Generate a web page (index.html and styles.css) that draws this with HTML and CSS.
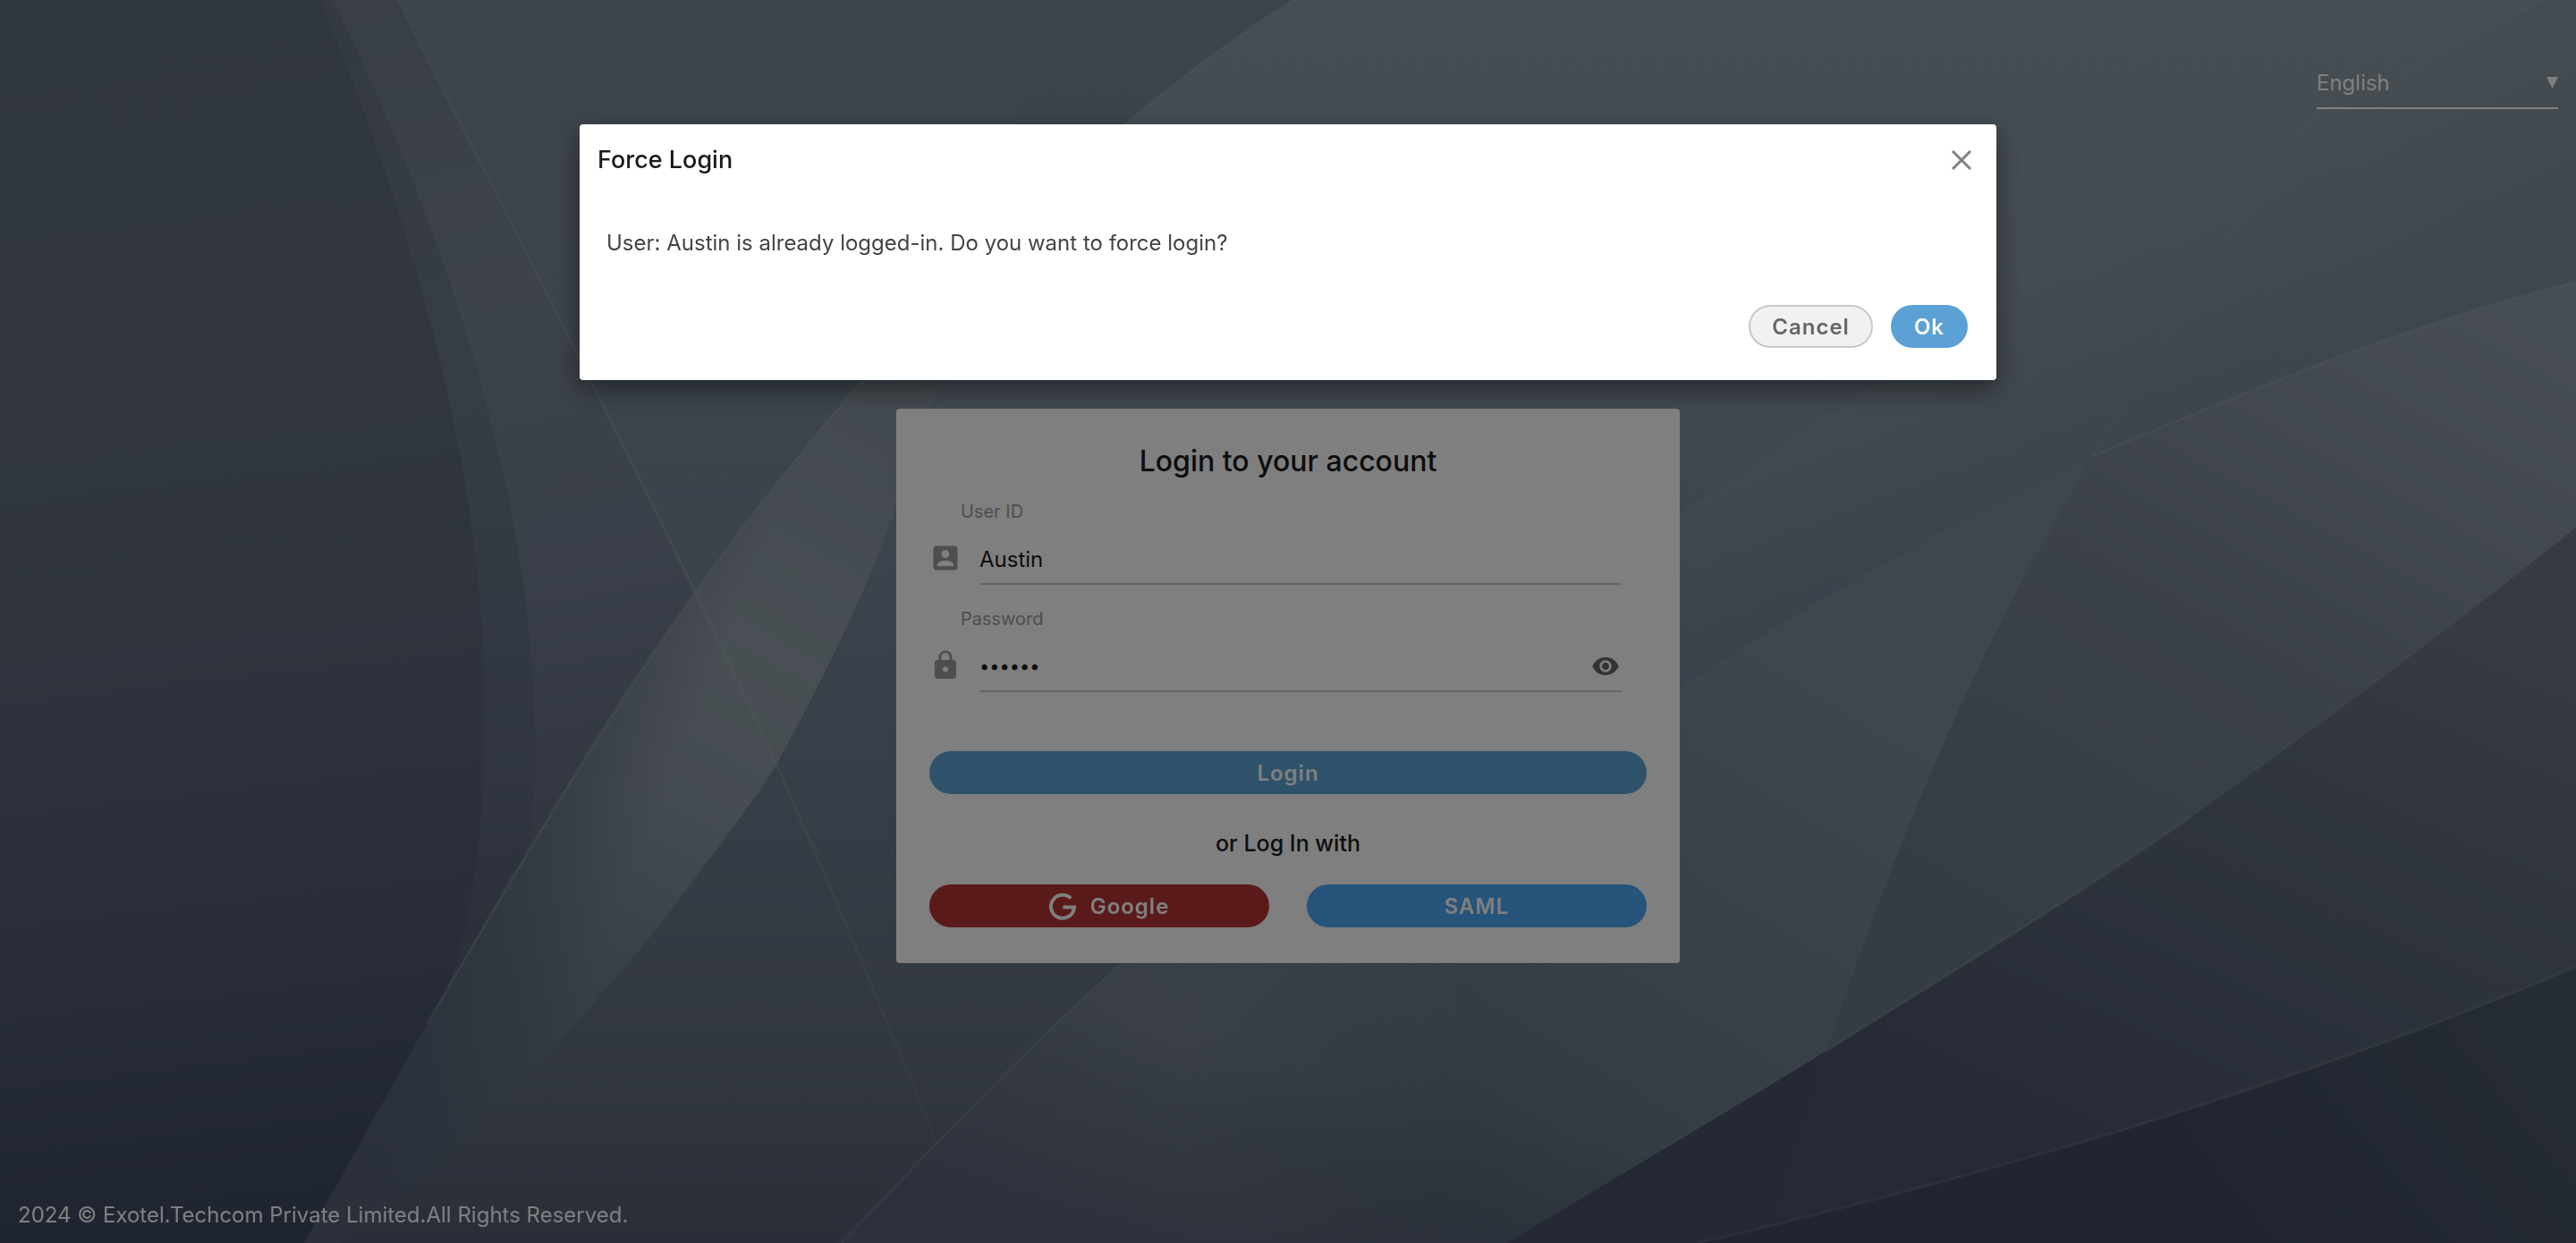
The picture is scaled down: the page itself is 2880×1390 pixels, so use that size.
FILE: index.html
```html
<!DOCTYPE html>
<html lang="en">
<head>
<meta charset="utf-8">
<meta name="viewport" content="width=device-width, initial-scale=1">
<title>Login</title>
<link rel="stylesheet" href="styles.css">
</head>
<body>
<svg class="backdrop" viewBox="0 0 2880 1390" preserveAspectRatio="none" aria-hidden="true">
  <defs>
    <linearGradient id="base" x1="0" y1="0" x2="0" y2="1"><stop offset="0" stop-color="#7a8894"/><stop offset=".4" stop-color="#768496"/><stop offset=".6" stop-color="#727f90"/><stop offset=".8" stop-color="#64707f"/><stop offset="1" stop-color="#525c70"/></linearGradient>
    <linearGradient id="strip" gradientUnits="userSpaceOnUse" x1="420" y1="0" x2="600" y2="1080"><stop offset="0" stop-color="#727f8a"/><stop offset=".3" stop-color="#7a8792"/><stop offset=".6" stop-color="#747f92"/><stop offset="1" stop-color="#5a647a"/></linearGradient>
    <linearGradient id="lobeOuter" x1="0" y1="0" x2="0" y2="1"><stop offset="0" stop-color="#687580"/><stop offset=".3" stop-color="#6e7b88"/><stop offset=".6" stop-color="#626d82"/><stop offset=".8" stop-color="#535d74"/><stop offset="1" stop-color="#465068"/></linearGradient>
    <linearGradient id="lobeInner" gradientUnits="userSpaceOnUse" x1="100" y1="0" x2="260" y2="1390"><stop offset="0" stop-color="#5f6d78"/><stop offset=".3" stop-color="#636f7b"/><stop offset=".5" stop-color="#5e687b"/><stop offset=".75" stop-color="#525c74"/><stop offset="1" stop-color="#3e4862"/></linearGradient>
    <linearGradient id="sky" gradientUnits="userSpaceOnUse" x1="0" y1="0" x2="0" y2="1390"><stop offset="0" stop-color="#8d9ca6"/><stop offset=".2" stop-color="#8a98a3"/><stop offset=".45" stop-color="#7a889a"/><stop offset=".7" stop-color="#6c788a"/><stop offset=".85" stop-color="#646f80"/><stop offset="1" stop-color="#525c70"/></linearGradient>
    <linearGradient id="ribbon" gradientUnits="userSpaceOnUse" x1="1100" y1="280" x2="500" y2="1390"><stop offset="0" stop-color="#7f8c98"/><stop offset=".2" stop-color="#8895a0"/><stop offset=".4" stop-color="#929fa8"/><stop offset=".55" stop-color="#8b98a2"/><stop offset=".78" stop-color="#667a84"/><stop offset="1" stop-color="#566176"/></linearGradient>
    <linearGradient id="ribbonEdge" gradientUnits="userSpaceOnUse" x1="500" y1="922" x2="700" y2="1002"><stop offset="0" stop-color="#566076" stop-opacity=".8"/><stop offset=".4" stop-color="#566076" stop-opacity=".55"/><stop offset="1" stop-color="#566076" stop-opacity="0"/></linearGradient>
    <linearGradient id="under" gradientUnits="userSpaceOnUse" x1="2240" y1="330" x2="2330" y2="500"><stop offset="0" stop-color="#8997a0"/><stop offset="1" stop-color="#7a8798"/></linearGradient>
    <linearGradient id="wave" gradientUnits="userSpaceOnUse" x1="1960" y1="720" x2="1560" y2="1390"><stop offset="0" stop-color="#808c9a"/><stop offset=".4" stop-color="#74818f"/><stop offset=".7" stop-color="#677a85"/><stop offset=".85" stop-color="#60707d"/><stop offset="1" stop-color="#566172"/></linearGradient>
    <linearGradient id="waveLeft" gradientUnits="userSpaceOnUse" x1="1000" y1="0" x2="1640" y2="0"><stop offset="0" stop-color="#6a7486"/><stop offset=".5" stop-color="#7e8a94" stop-opacity=".7"/><stop offset="1" stop-color="#7e8a94" stop-opacity="0"/></linearGradient>
    <linearGradient id="waveFoot" gradientUnits="userSpaceOnUse" x1="1300" y1="1150" x2="1240" y2="1390"><stop offset="0" stop-color="#566076" stop-opacity="0"/><stop offset="1" stop-color="#566076" stop-opacity=".9"/></linearGradient>
    <linearGradient id="waveRight" gradientUnits="userSpaceOnUse" x1="2760" y1="330" x2="2330" y2="1120"><stop offset="0" stop-color="#8f9ca6"/><stop offset=".3" stop-color="#828f99"/><stop offset=".5" stop-color="#76838f"/><stop offset=".8" stop-color="#6f7c89"/><stop offset="1" stop-color="#6a7a85"/></linearGradient>
    <linearGradient id="deep" gradientUnits="userSpaceOnUse" x1="2760" y1="700" x2="2450" y2="1390"><stop offset="0" stop-color="#6b7781"/><stop offset=".25" stop-color="#626d7a"/><stop offset=".6" stop-color="#586376"/><stop offset="1" stop-color="#4a546c"/></linearGradient>
    <linearGradient id="floor" gradientUnits="userSpaceOnUse" x1="2880" y1="1081" x2="2500" y2="1390"><stop offset="0" stop-color="#4e5a68"/><stop offset="1" stop-color="#404a62"/></linearGradient>
    <linearGradient id="fadeLine" x1="0" y1="0" x2="0" y2="1"><stop offset="0" stop-color="#a6b4bc" stop-opacity=".15"/><stop offset=".5" stop-color="#a6b4bc" stop-opacity=".35"/><stop offset="1" stop-color="#a6b4bc" stop-opacity=".1"/></linearGradient>
  </defs>
  <rect width="2880" height="1390" fill="url(#base)"/>
  <path fill="url(#strip)" d="M340 0H445C560 230 700 500 776 662C680 790 600 935 478 1144H400Z"/>
  <path fill="url(#lobeOuter)" d="M0 0H372C500 260 598 560 598 830C598 870 597 905 594 940L478 1144L340 1390H0Z"/>
  <path fill="url(#lobeInner)" d="M0 0H358C470 270 542 540 542 800C542 950 525 1035 498 1110L345 1390H0Z"/>
  <path fill="#8e9ca6" fill-opacity=".15" d="M445 0H1151C1144 80 1135 110 1120 265C1040 345 900 490 776 662C700 500 560 230 445 0Z"/>
  <path fill="url(#sky)" d="M2880 0H1446C1340 66 1220 165 1120 265C1090 350 1060 410 1001 567C960 690 930 750 868 855C830 920 800 950 762 1002L551 1241L380 1390H2880Z"/>
  <path fill="url(#ribbon)" d="M1120 265C1030 345 930 460 827 594C700 765 600 935 478 1144C430 1230 385 1310 340 1390H380C460 1330 510 1283 551 1241C640 1150 700 1085 762 1002C805 945 840 900 868 855C930 740 970 660 1001 567C1040 450 1080 380 1120 265Z"/>
  <path fill="url(#ribbonEdge)" d="M1120 265C1030 345 930 460 827 594C700 765 600 935 478 1144C430 1230 385 1310 340 1390H380C460 1330 510 1283 551 1241C640 1150 700 1085 762 1002C805 945 840 900 868 855C930 740 970 660 1001 567C1040 450 1080 380 1120 265Z"/>
  <path fill="url(#under)" fill-opacity=".6" d="M1878 574C2010 485 2120 415 2235 341C2350 270 2460 210 2579 146L2845 0H2880V330C2700 370 2600 400 2340 510L1878 771Z"/>
  <path fill="url(#wave)" d="M2880 315C2700 360 2530 430 2340 510C2180 585 2030 670 1878 771C1620 870 1400 960 1254 1077C1150 1170 1030 1290 935 1390H2880Z"/>
  <path fill="url(#waveLeft)" d="M1640 900C1400 980 1330 1010 1254 1077C1150 1170 1030 1290 935 1390H1640Z"/>
  <path fill="url(#waveFoot)" d="M1254 1077C1150 1170 1030 1290 935 1390H2880V1077Z"/>
  <path fill="url(#waveRight)" d="M2880 315C2700 360 2530 430 2340 510C2200 740 2110 970 2042 1175H2880Z"/>
  <path fill="url(#deep)" d="M2880 589C2730 710 2590 812 2450 913C2310 1010 2180 1088 2042 1175C1920 1250 1810 1315 1685 1390H2880Z"/>
  <path fill="#48526a" fill-opacity=".3" d="M2042 1175C2015 1250 1993 1320 1977 1390H1685C1800 1320 1930 1245 2042 1175Z"/>
  <path fill="url(#floor)" d="M2880 1081C2720 1150 2540 1212 2359 1268C2200 1315 2050 1355 1899 1390H2880Z"/>
  <g fill="none" stroke="#a6b4bc" stroke-width="3">
    <path stroke="url(#fadeLine)" d="M445 0C550 210 650 400 776 660C880 870 970 1090 1047 1277"/>
    <path stroke-opacity=".25" d="M1446 0C1340 66 1220 165 1120 265C1030 345 930 460 827 594C700 765 600 935 478 1144"/>
    <path stroke-opacity=".3" d="M2880 315C2700 360 2530 430 2340 510"/>
    <path stroke-opacity=".2" d="M1254 1077C1150 1170 1050 1275 941 1390"/>
    <path stroke-opacity=".12" d="M2092 434C2300 300 2500 190 2845 0"/>
    <path stroke-opacity=".12" d="M2698 0C2540 170 2460 320 2340 510"/>
    <path stroke-opacity=".12" d="M2880 589C2730 710 2590 812 2450 913"/>
    <path stroke-opacity=".25" d="M2450 913C2310 1010 2180 1088 2042 1175"/>
    <path stroke-opacity=".18" d="M2880 1081C2720 1150 2540 1212 2359 1268C2200 1315 2050 1355 1899 1390"/>
  </g>
</svg>

<div class="page">
  <header class="topbar">
    <div class="language">
      <select class="language-select" aria-label="Language"><option>English</option></select>
      <svg class="language-arrow" viewBox="0 0 13 13" aria-hidden="true"><path d="M0 0H13L6.500 13Z"/></svg>
    </div>
  </header>

  <main class="content">
    <form class="card">
      <h1 class="card-title">Login to your account</h1>
      <div class="field">
        <label class="field-label" for="user">User ID</label>
        <div class="field-row">
          <svg class="field-icon" viewBox="0 0 24 24" aria-hidden="true"><path d="M3 5v14c0 1.100.9 2 2 2h14c1.100 0 2-.9 2-2V5c0-1.100-.9-2-2-2H5c-1.100 0-2 .9-2 2zm12 4c0 1.660-1.340 3-3 3s-3-1.340-3-3 1.340-3 3-3 3 1.340 3 3zm-9 8c0-2 4-3.100 6-3.100s6 1.100 6 3.100v1H6v-1z"/></svg>
          <div class="field-box"><input class="field-input" id="user" type="text" value="Austin"></div>
        </div>
      </div>
      <div class="field">
        <label class="field-label" for="password">Password</label>
        <div class="field-row">
          <svg class="field-icon" viewBox="0 0 24 24" aria-hidden="true"><path d="M18 8h-1V6c0-2.760-2.240-5-5-5S7 3.240 7 6v2H6c-1.100 0-2 .9-2 2v10c0 1.100.9 2 2 2h12c1.100 0 2-.9 2-2V10c0-1.100-.9-2-2-2zm-6 9c-1.100 0-2-.9-2-2s.9-2 2-2 2 .9 2 2-.9 2-2 2zm3.100-9H8.900V6c0-1.710 1.390-3.100 3.100-3.100s3.100 1.390 3.100 3.100v2z"/></svg>
          <div class="field-box">
            <input class="field-input password" id="password" type="password" value="secret">
            <button class="reveal" type="button" aria-label="Show password"><svg viewBox="0 0 24 24" aria-hidden="true"><path d="M12 4.500C7 4.500 2.730 7.610 1 12c1.730 4.390 6 7.500 11 7.500s9.270-3.110 11-7.500c-1.730-4.390-6-7.500-11-7.500zM12 17c-2.760 0-5-2.240-5-5s2.240-5 5-5 5 2.240 5 5-2.240 5-5 5zm0-8c-1.660 0-3 1.340-3 3s1.340 3 3 3 3-1.340 3-3-1.340-3-3-3z"/></svg></button>
          </div>
        </div>
      </div>
      <button class="button login" type="submit">Login</button>
      <p class="divider">or Log In with</p>
      <div class="providers">
        <button class="button google" type="button"><svg class="google-mark" viewBox="0 0 30 30" aria-hidden="true"><path d="M24.300 5.700A13 13 0 1 0 28 15.500H15.500" fill="none" stroke="currentColor" stroke-width="4"/></svg>Google</button>
        <button class="button saml" type="button">SAML</button>
      </div>
    </form>
  </main>

  <footer class="footer">2024 © Exotel.Techcom Private Limited.All Rights Reserved.</footer>
</div>

<div class="overlay">
  <dialog class="modal" open aria-labelledby="modal-title">
    <div class="modal-head">
      <h2 class="modal-title" id="modal-title">Force Login</h2>
      <button class="close" type="button" aria-label="Close"><svg viewBox="0 0 22 22" aria-hidden="true"><path d="M1 1L21 21M21 1L1 21"/></svg></button>
    </div>
    <p class="modal-text">User: Austin is already logged-in. Do you want to force login?</p>
    <div class="modal-actions">
      <button class="button cancel" type="button">Cancel</button>
      <button class="button ok" type="button">Ok</button>
    </div>
  </dialog>
</div>
</body>
</html>
```
FILE: styles.css
```css
* {
  box-sizing: border-box;
}

body {
  margin: 0;
  font-family: Inter, "Liberation Sans", sans-serif;
  font-size: 24px;
  line-height: 32px;
  color: #1a1a1a;
  background: #76849a;
}

.backdrop {
  position: fixed;
  inset: 0;
  width: 100%;
  height: 100%;
}

.page {
  position: relative;
  display: flex;
  flex-direction: column;
  min-height: 100vh;
}

.topbar {
  display: flex;
  justify-content: flex-end;
  padding: 64px 20px 0 0;
}

.language {
  display: flex;
  align-items: center;
  width: 270px;
  height: 58px;
  border-bottom: 2px solid #fff;
}

.language-select {
  appearance: none;
  flex: 1;
  padding: 2px 0 0;
  border: 0;
  background: none;
  font: inherit;
  color: #fff;
}

.language-arrow {
  width: 13px;
  height: 13px;
  fill: #fff;
}

.content {
  display: flex;
  justify-content: center;
  padding: 335px 24px 48px;
}

.card {
  display: flex;
  flex-direction: column;
  width: 100%;
  max-width: 876px;
  padding: 37px 37px 40px;
  border-radius: 4px;
  background: #fff;
}

.card-title {
  margin: 0 0 22px;
  font-size: 32px;
  font-weight: 500;
  line-height: 44px;
  text-align: center;
}

.field {
  margin-bottom: 26px;
}

.field-label {
  display: block;
  padding-left: 35px;
  font-size: 20px;
  line-height: 24px;
  color: #9c9c9c;
}

.field-row {
  display: flex;
  align-items: center;
  gap: 20px;
  padding: 14px 28px 0 0;
}

.field-icon {
  width: 36px;
  height: 36px;
  margin-bottom: 4px;
  fill: #9c9c9c;
}

.field-box {
  display: flex;
  flex: 1;
  align-items: center;
  height: 56px;
  border-bottom: 2px solid #ccc;
}

.field-input {
  flex: 1;
  min-width: 0;
  height: 54px;
  padding: 0;
  border: 0;
  outline: 0;
  background: none;
  font: inherit;
  color: #1a1a1a;
}

.password {
  font-size: 20px;
}

.reveal {
  display: flex;
  padding: 0 2px 0 0;
  border: 0;
  background: none;
}

.reveal svg {
  width: 32px;
  height: 32px;
  fill: #666;
}

.button {
  display: flex;
  align-items: center;
  justify-content: center;
  gap: 16px;
  height: 48px;
  padding: 1px 26px 0;
  border: 0;
  border-radius: 24px;
  font: inherit;
  font-weight: 600;
  letter-spacing: 1px;
  color: #fff;
}

.login {
  margin-top: 40px;
  background: #5ea4d6;
}

.divider {
  margin: 39px 0 30px;
  font-size: 25px;
  font-weight: 500;
  text-align: center;
}

.providers {
  display: grid;
  grid-template-columns: 1fr 1fr;
  gap: 42px;
}

.google {
  padding-left: 48px;
  background: #b63434;
}

.google-mark {
  width: 30px;
  height: 30px;
}

.saml {
  background: #4ca8f4;
}

.footer {
  margin-top: auto;
  padding: 0 20px 15px;
  color: #fff;
}

.overlay {
  position: fixed;
  inset: 0;
  padding-top: 139px;
  background: rgba(0, 0, 0, 0.5);
}

.modal {
  position: static;
  width: 55%;
  margin: 0 auto;
  padding: 20px 28px 36px 20px;
  border: 0;
  border-radius: 4px;
  background: #fff;
  color: #1a1a1a;
  box-shadow: 0 10px 28px rgba(0, 0, 0, 0.45);
}

.modal-head {
  display: flex;
  align-items: center;
  justify-content: space-between;
  height: 40px;
}

.modal-title {
  margin: 0;
  font-size: 27px;
  font-weight: 500;
}

.close {
  display: flex;
  padding: 0;
  border: 0;
  background: none;
}

.close svg {
  width: 22px;
  height: 22px;
  fill: none;
  stroke: #808080;
  stroke-width: 3;
}

.modal-text {
  margin: 57px 0 53px;
  padding-left: 10px;
  color: #444;
}

.modal-actions {
  display: flex;
  justify-content: flex-end;
  gap: 20px;
  padding-right: 4px;
}

.cancel {
  padding: 1px 24px 0;
  border: 2px solid #c8c8c8;
  background: #f1f1f1;
  color: #666;
}

.ok {
  background: #5ba1d6;
}
```
